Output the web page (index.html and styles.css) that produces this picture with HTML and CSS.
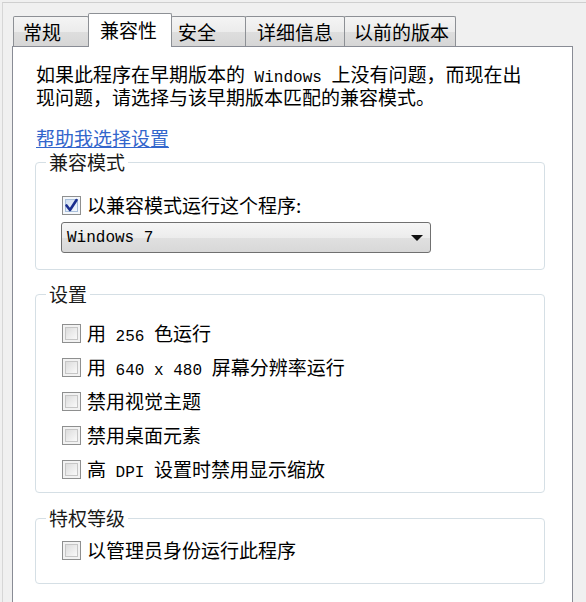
FILE: index.html
```html
<!DOCTYPE html>
<html lang="zh-CN">
<head>
<meta charset="utf-8">
<title>兼容性</title>
<link rel="stylesheet" href="styles.css">
</head>
<body>
<div class="window">
  <div class="tabs">
    <div class="tab tab-general">常规</div>
    <div class="tab tab-compat active">兼容性</div>
    <div class="tab tab-security">安全</div>
    <div class="tab tab-details">详细信息</div>
    <div class="tab tab-previous">以前的版本</div>
  </div>
  <div class="panel">
    <p class="intro">如果此程序在早期版本的<span class="mono"> Windows </span>上没有问题，而现在出<br>现问题，请选择与该早期版本匹配的兼容模式。</p>
    <a class="help" href="#">帮助我选择设置</a>

    <fieldset class="group group-compat">
      <legend>兼容模式</legend>
      <div class="content">
        <label class="row">
          <span class="box checked"><svg viewBox="0 0 19 19" width="19" height="19"><path d="M4.5 9.5 L8 14 L14.5 4" fill="none" stroke="#1c2f8f" stroke-width="2.6" stroke-linecap="round" stroke-linejoin="round"/></svg></span>
          <span class="text">以兼容模式运行这个程序:</span>
        </label>
        <div class="select">
          <span class="mono">Windows 7</span>
          <span class="arrow"></span>
        </div>
      </div>
    </fieldset>

    <fieldset class="group group-settings">
      <legend>设置</legend>
      <div class="content list">
        <label class="row"><span class="box"></span><span class="text">用<span class="mono"> 256 </span>色运行</span></label>
        <label class="row"><span class="box"></span><span class="text">用<span class="mono"> 640 x 480 </span>屏幕分辨率运行</span></label>
        <label class="row"><span class="box"></span><span class="text">禁用视觉主题</span></label>
        <label class="row"><span class="box"></span><span class="text">禁用桌面元素</span></label>
        <label class="row"><span class="box"></span><span class="text">高<span class="mono"> DPI </span>设置时禁用显示缩放</span></label>
      </div>
    </fieldset>

    <fieldset class="group group-priv">
      <legend>特权等级</legend>
      <div class="content">
        <label class="row"><span class="box"></span><span class="text">以管理员身份运行此程序</span></label>
      </div>
    </fieldset>
  </div>
</div>
</body>
</html>
```
FILE: styles.css
```css
* { box-sizing: border-box; }
html, body {
  margin: 0;
  padding: 0;
  width: 586px;
  height: 602px;
  overflow: hidden;
  background: #f0f0f0;
}
body {
  padding: 2px 0 0 2px;
  font-family: "Noto Sans CJK SC", "Noto Sans", sans-serif;
  font-size: 19px;
  line-height: 22px;
  color: #000;
}
.window {
  border-top: 1px solid #cfcfcf;
  border-left: 1px solid #d6d6d6;
  height: 600px;
  padding: 10px 0 0 9px;
  display: flex;
  flex-direction: column;
}
.mono {
  font-family: "Liberation Mono", "DejaVu Sans Mono", monospace;
  font-size: 16px;
  line-height: 1;
  white-space: pre;
}
.tabs {
  display: flex;
  align-items: flex-end;
  height: 33px;
  flex: none;
  margin-left: 1px;
}
.tab {
  height: 30px;
  border: 1px solid #8d9095;
  border-bottom: none;
  border-radius: 2px 2px 0 0;
  background: linear-gradient(#f4f4f4, #ececec 50%, #dedede 51%, #d6d6d6);
  line-height: 29px;
  white-space: nowrap;
  margin-right: -1px;
  color: #000;
}
.tab.active {
  height: 34px;
  margin-bottom: -1px;
  background: #fff;
  position: relative;
  z-index: 1;
  line-height: 31px;
}
.tab-general { width: 76px; padding-left: 9px; }
.tab-compat { width: 84px; padding-left: 11px; }
.tab-security { width: 75px; padding-left: 6px; }
.tab-details { width: 100px; padding-left: 11px; }
.tab-previous { width: 112px; padding-left: 9px; }

.panel {
  width: 561px;
  flex: 1;
  background: #fff;
  border: 1px solid #898c95;
  border-bottom: none;
  padding: 16px 27px 0 22px;
}
.intro {
  margin: 0 0 0 1px;
  white-space: nowrap;
}
.help {
  display: block;
  margin: 19px 0 0 1px;
  color: #3366cc;
  text-decoration: underline;
  width: max-content;
}
.group {
  margin: 2px 0 0 0;
  border: 1px solid #d5dfe5;
  border-radius: 4px;
  padding: 0 0 0 10px;
  min-width: 0;
}
.group legend {
  padding: 0 3px;
  color: #1a1a1a;
  line-height: 22px;
}
.group-settings { margin-top: 13px; }
.group-priv { margin-top: 14px; }
.content {
  margin-left: 16px;
}
.group-compat .content { padding: 21px 0 16px; }
.group-settings .content { padding: 17px 0 12px; display: flex; flex-direction: column; gap: 12px; }
.group-priv .content { padding: 10px 0 22px; }

.row {
  display: flex;
  align-items: center;
  gap: 6px;
  height: 22px;
  white-space: nowrap;
}
.box {
  width: 19px;
  height: 19px;
  flex: none;
  border: 1px solid #8e8f8f;
  background: linear-gradient(135deg, #d4d4d4, #f4f4f4 70%, #ffffff);
  box-shadow: inset 0 0 0 2px #f2f2f2, inset 0 0 0 3px #c6c6c6;
  display: block;
}
.box.checked {
  background: linear-gradient(135deg, #c6d6ec, #eef4fb 70%, #ffffff);
  box-shadow: inset 0 0 0 2px #f4f7fb, inset 0 0 0 3px #a8bfdb;
}
.box svg { display: block; margin: -1px; }
.select {
  margin: 6px 0 0 -1px;
  width: 370px;
  height: 31px;
  border: 1px solid #707070;
  border-radius: 3px;
  background: linear-gradient(#f6f6f6, #ececec 50%, #e0e0e0 51%, #d8d8d8);
  display: flex;
  align-items: center;
  justify-content: space-between;
  padding: 0 7px 0 5px;
}
.arrow {
  width: 0;
  height: 0;
  border-left: 6px solid transparent;
  border-right: 6px solid transparent;
  border-top: 6px solid #111;
}
```
